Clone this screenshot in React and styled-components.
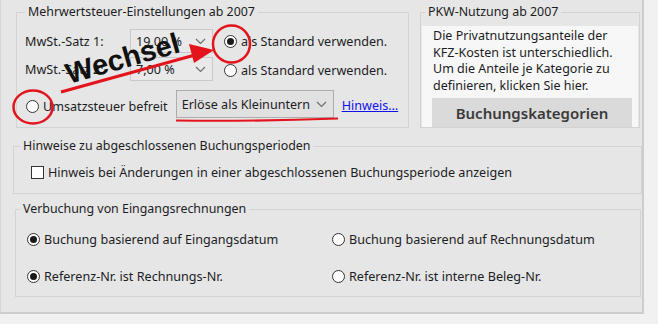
import React from "react";
import styled, { createGlobalStyle } from "styled-components";

const GlobalStyle = createGlobalStyle`
  body {
    margin: 0;
    background: #f1f1f1;
    font-family: "Noto Sans", "Open Sans", sans-serif;
    font-size: 12.6px;
    color: #1c1c24;
  }
`;

const Panel = styled.div`
  position: relative;
  width: 644px;
  height: 314px;
  box-sizing: border-box;
  padding-top: 5px;
  background: #e6e6e6;
  border-left: 1px solid #d6d6d6;
  border-right: 2px solid #cdcdcd;
  border-bottom: 2px solid #cdcdcd;
`;

const TopRow = styled.div`
  display: flex;
  align-items: flex-start;
  gap: 11px;
  margin-left: 15px;
`;

const Group = styled.fieldset`
  margin: ${(p) => p.$margin || 0};
  padding: ${(p) => p.$pad || "0 8px"};
  width: ${(p) => p.$w}px;
  height: ${(p) => p.$h}px;
  box-sizing: border-box;
  border: 1px solid #d3d3d3;
  min-width: 0;
`;

const Legend = styled.legend`
  padding: 0 3px;
  margin-left: ${(p) => p.$ml || 0}px;
  font-size: 12.4px;
  line-height: 14px;
  color: #1c1c24;
  white-space: nowrap;
`;

const RateGrid = styled.div`
  display: grid;
  grid-template-columns: 105px 83px auto;
  row-gap: 4px;
  align-items: center;
  margin-top: 10px;
`;

const Label = styled.span`
  white-space: nowrap;
`;

const Combo = styled.div`
  width: ${(p) => p.$w}px;
  height: ${(p) => p.$h}px;
  box-sizing: border-box;
  display: flex;
  align-items: center;
  padding: 0 6px 0 5px;
  border: 1px solid ${(p) => (p.$dark ? "#adadad" : "#c9c9c9")};
  background: ${(p) => (p.$dark ? "#e1e1e1" : "#e9e9e9")};
  margin-left: ${(p) => p.$ml || 0}px;
  flex-shrink: 0;
  svg {
    margin-left: 6px;
    flex-shrink: 0;
  }
`;

const ComboText = styled.span`
  flex: 1;
  overflow: hidden;
  white-space: nowrap;
`;

const Option = styled.label`
  display: flex;
  align-items: center;
  gap: 4px;
  white-space: nowrap;
  margin-left: ${(p) => p.$ml || 0}px;
  margin-top: ${(p) => p.$dy || 0}px;
`;

const RadioDot = styled.span`
  width: 13px;
  height: 13px;
  box-sizing: border-box;
  border-radius: 50%;
  border: 1px solid #333;
  background: #fff;
  display: grid;
  place-items: center;
  flex-shrink: 0;
  &::after {
    content: "";
    width: 7px;
    height: 7px;
    border-radius: 50%;
    background: ${(p) => (p.$on ? "#1a1a1a" : "transparent")};
  }
`;

const CheckBox = styled.span`
  width: 13px;
  height: 13px;
  box-sizing: border-box;
  border: 1px solid #333;
  background: #fff;
  flex-shrink: 0;
`;

const ExemptRow = styled.div`
  display: flex;
  align-items: center;
  margin-top: 9px;
  height: 28px;
`;

const Link = styled.a`
  color: #1010ee;
  text-decoration: underline;
  margin-left: 8px;
  margin-top: 3px;
  white-space: nowrap;
`;

const InfoBox = styled.div`
  margin-top: 7px;
  height: 101px;
  box-sizing: border-box;
  background: #f7f7f7;
  padding: 2px 3px 0 11px;
  overflow: hidden;
  line-height: 16.7px;
  font-size: 12.5px;
  white-space: nowrap;
`;

const CategoryButton = styled.div`
  margin-top: 3px;
  width: 200px;
  height: 30px;
  margin-left: -1px;
  background: #dadada;
  color: #3a3a3a;
  font-size: 15px;
  font-weight: 600;
  text-align: center;
  line-height: 30px;
`;

const CheckRow = styled.div`
  display: flex;
  align-items: center;
  gap: 4px;
  height: 20px;
  margin: 9px 0 0 11px;
  white-space: nowrap;
`;

const OptionGrid = styled.div`
  display: grid;
  grid-template-columns: 305px auto;
  grid-auto-rows: 20px;
  row-gap: 17px;
  align-items: center;
  margin: 13px 0 0 7px;
`;

const Overlay = styled.svg`
  position: absolute;
  left: 0;
  top: 0;
  pointer-events: none;
`;

const Chevron = () => (
  <svg width="11" height="7" viewBox="0 0 11 7">
    <polyline points="1,1 5.5,5.5 10,1" fill="none" stroke="#6b6b6b" strokeWidth="1.1" />
  </svg>
);

const Radio = ({ on, children, ml, dy }) => (
  <Option $ml={ml} $dy={dy}>
    <RadioDot $on={on} />
    {children}
  </Option>
);

export default function App() {
  return (
    <>
      <GlobalStyle />
      <Panel>
        <TopRow>
          <Group $w={393} $h={123}>
            <Legend>Mehrwertsteuer-Einstellungen ab 2007</Legend>
            <RateGrid>
              <Label>MwSt.-Satz 1:</Label>
              <Combo $w={83} $h={24}>
                <ComboText>19,00 %</ComboText>
                <Chevron />
              </Combo>
              <Radio on ml={11}>als Standard verwenden.</Radio>
              <Label>MwSt.-Satz 2:</Label>
              <Combo $w={83} $h={24}>
                <ComboText>7,00 %</ComboText>
                <Chevron />
              </Combo>
              <Radio ml={11} dy={3}>als Standard verwenden.</Radio>
            </RateGrid>
            <ExemptRow>
              <Radio ml={1} dy={5}>Umsatzsteuer befreit</Radio>
              <Combo $w={158} $h={28} $dark $ml={8}>
                <ComboText>Erlöse als Kleinunternehmer</ComboText>
                <Chevron />
              </Combo>
              <Link>Hinweis…</Link>
            </ExemptRow>
          </Group>
          <Group $w={220} $h={123} $pad="0 1px">
            <Legend $ml={3}>PKW-Nutzung ab 2007</Legend>
            <InfoBox>
              Die Privatnutzungsanteile der
              <br />
              KFZ-Kosten ist unterschiedlich.
              <br />
              Um die Anteile je Kategorie zu
              <br />
              definieren, klicken Sie hier.
              <CategoryButton>Buchungskategorien</CategoryButton>
            </InfoBox>
          </Group>
        </TopRow>

        <Group $w={629} $h={55} $pad="0 6px" $margin="11px 0 0 12px">
          <Legend>Hinweise zu abgeschlossenen Buchungsperioden</Legend>
          <CheckRow>
            <CheckBox />
            Hinweis bei Änderungen in einer abgeschlossenen Buchungsperiode anzeigen
          </CheckRow>
        </Group>

        <Group $w={626} $h={95} $pad="0 4px" $margin="8px 0 0 14px">
          <Legend>Verbuchung von Eingangsrechnungen</Legend>
          <OptionGrid>
            <Radio on>Buchung basierend auf Eingangsdatum</Radio>
            <Radio>Buchung basierend auf Rechnungsdatum</Radio>
            <Radio on>Referenz-Nr. ist Rechnungs-Nr.</Radio>
            <Radio>Referenz-Nr. ist interne Beleg-Nr.</Radio>
          </OptionGrid>
        </Group>

        <Overlay width="644" height="314">
          <ellipse cx="230.5" cy="44" rx="18.5" ry="18.5" fill="none" stroke="#e3141c" strokeWidth="2.5" />
          <ellipse cx="32" cy="107" rx="19.5" ry="16.5" fill="none" stroke="#e3141c" strokeWidth="2.5" />
          <line x1="60" y1="92" x2="194" y2="55" stroke="#e3141c" strokeWidth="3.2" />
          <polygon points="213,50 188,44 193,63" fill="#e3141c" />
          <path d="M175 120.5 Q256 121.5 337 118.5" fill="none" stroke="#e3141c" strokeWidth="2.2" />
          <text
            x="68"
            y="84"
            transform="rotate(-16 68 84)"
            fontFamily="'Liberation Sans', Arial, sans-serif"
            fontWeight="700"
            fontSize="29"
            fill="#111"
          >
            Wechsel
          </text>
        </Overlay>
      </Panel>
    </>
  );
}
